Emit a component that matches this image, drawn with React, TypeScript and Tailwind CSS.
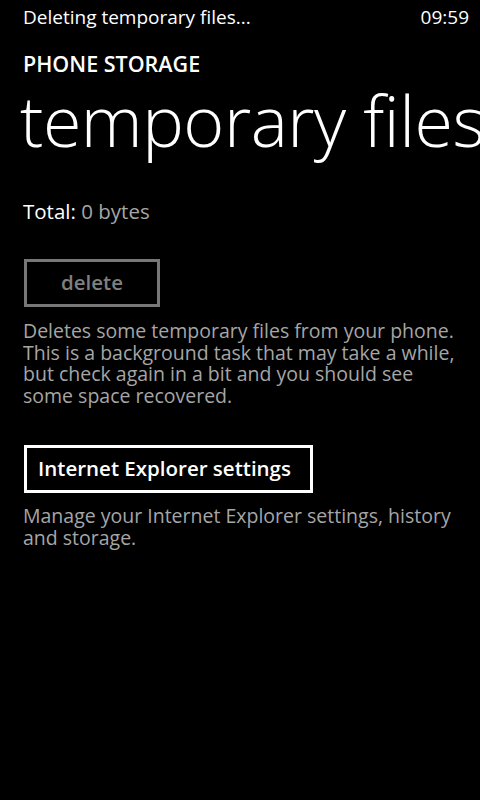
export default function App() {
  const font = { fontFamily: '"Open Sans", "Noto Sans", sans-serif' };
  return (
    <div className="w-[480px] h-[800px] bg-black text-white overflow-hidden flex flex-col" style={font}>
      <div className="flex justify-between pl-[23px] pr-[11px] pt-[5px] text-[19px] leading-[24px]">
        <span>Deleting temporary files...</span>
        <span>09:59</span>
      </div>
      <div className="pl-[23px] mt-[22px] text-[21.5px] font-semibold leading-[26px]">PHONE STORAGE</div>
      <div className="pl-[20px] mt-[3px] text-[70px] font-light leading-[80px] whitespace-nowrap tracking-[-0.5px]">
        temporary files
      </div>
      <div className="pl-[23px] mt-[38px] text-[20.5px] leading-[26px]">
        <span>Total: </span>
        <span className="text-[#a6a6a6]">0 bytes</span>
      </div>
      <div className="pl-[24px] mt-[35px]">
        <div className="w-[136px] h-[48px] border-[3px] border-[#777777] flex items-center justify-center text-[20.5px] font-semibold text-[#7f7f7f] pb-[2px]">
          delete
        </div>
      </div>
      <p className="pl-[23px] mt-[13px] text-[19.5px] leading-[21.5px] text-[#a6a6a6] whitespace-nowrap">
        Deletes some temporary files from your phone.
        <br />
        This is a background task that may take a while,
        <br />
        but check again in a bit and you should see
        <br />
        some space recovered.
      </p>
      <div className="pl-[24px] mt-[39px]">
        <div className="inline-flex w-[289px] h-[48px] pl-[11px] border-[3px] border-white items-center text-[20.5px] font-semibold pb-[2px]">
          Internet Explorer settings
        </div>
      </div>
      <p className="pl-[23px] mt-[12px] text-[19.5px] leading-[21.5px] text-[#a6a6a6] whitespace-nowrap">
        Manage your Internet Explorer settings, history
        <br />
        and storage.
      </p>
    </div>
  );
}
